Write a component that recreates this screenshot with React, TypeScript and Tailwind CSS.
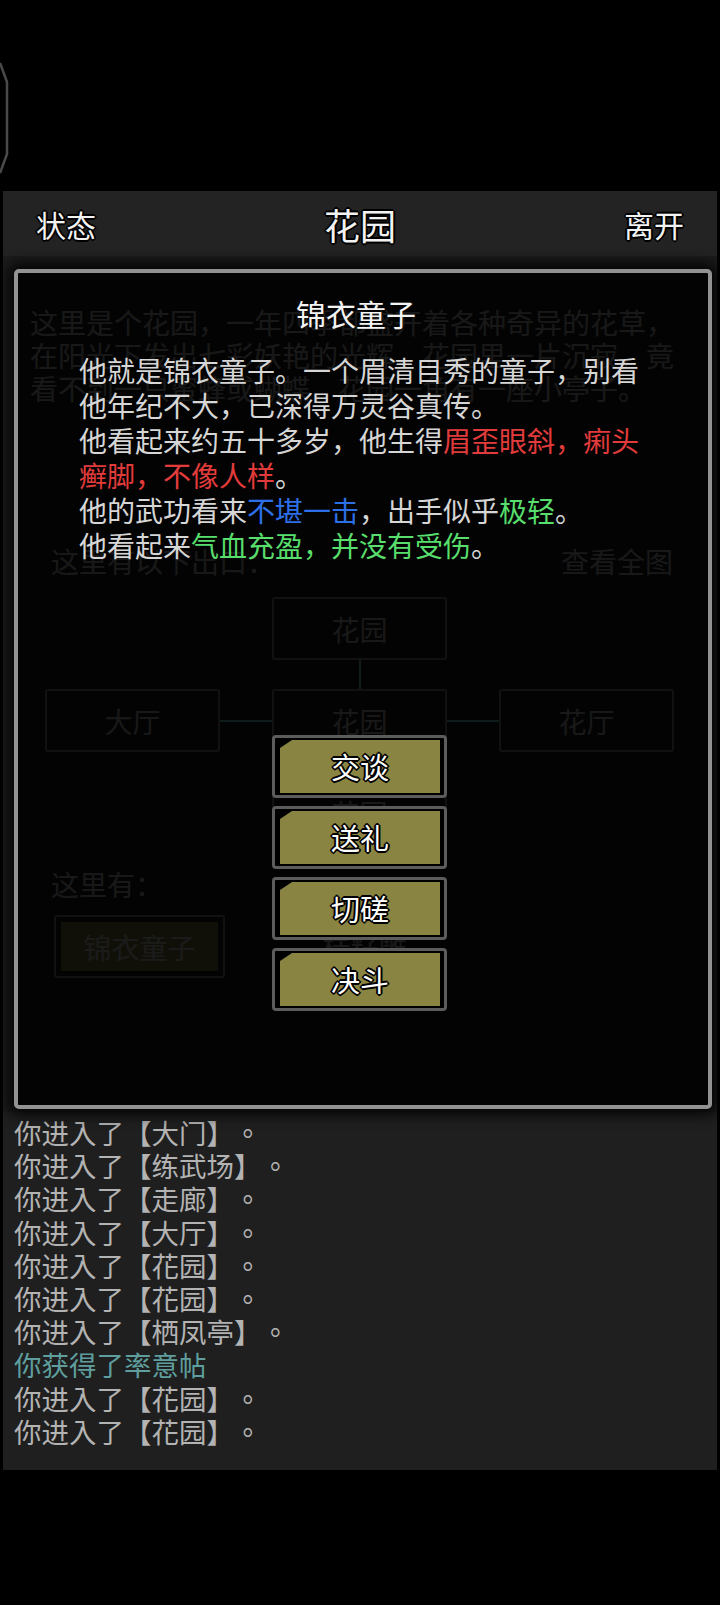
import React from "react";

const outline =
  "[text-shadow:-2px_0_0_#000,2px_0_0_#000,0_-2px_0_#000,0_2px_0_#000,-1px_-1px_0_#000,1px_1px_0_#000,-1px_1px_0_#000,1px_-1px_0_#000]";

const logLines: { text: string; gain?: boolean }[] = [
  { text: "你进入了【大门】。" },
  { text: "你进入了【练武场】。" },
  { text: "你进入了【走廊】。" },
  { text: "你进入了【大厅】。" },
  { text: "你进入了【花园】。" },
  { text: "你进入了【花园】。" },
  { text: "你进入了【栖凤亭】。" },
  { text: "你获得了率意帖", gain: true },
  { text: "你进入了【花园】。" },
  { text: "你进入了【花园】。" },
];

const actions = ["交谈", "送礼", "切磋", "决斗"];

function MapNode({ name }: { name: string }) {
  return (
    <div className="h-[63px] border-2 border-[#8a8a8a] rounded-[3px] flex items-center justify-center text-[28px] text-[#c4c4c4]">
      {name}
    </div>
  );
}

function ActionButton({ label }: { label: string }) {
  return (
    <div className="w-[175px] h-[63px] border-[3px] border-[#5c5c5c] rounded-[4px] bg-black pl-[5px] pr-[4px] pt-[2px] pb-[2px]">
      <div
        className={`h-full bg-[#8a8443] [clip-path:polygon(12px_0,100%_0,100%_100%,0_100%,0_8px)] flex items-center justify-center text-[29px] text-white ${outline}`}
      >
        {label}
      </div>
    </div>
  );
}

export default function App() {
  return (
    <div className="relative w-[720px] h-[1605px] bg-black overflow-hidden [text-spacing-trim:space-all] [font-family:'Noto_Sans_CJK_SC','Noto_Sans',sans-serif]">
      {/* floating ball peeking in from the left edge */}
      <svg className="absolute left-0 top-[60px]" width="12" height="116" viewBox="0 0 12 116">
        <path d="M0 3 L7 22 L7 94 L0 113" fill="none" stroke="#4a4a4a" strokeWidth="2.5" />
      </svg>

      <div className="h-[191px]" />

      {/* header */}
      <div className="mx-[3px] h-[65px] bg-[#232323] flex items-center justify-between px-[33px] text-[#f2f2f2]">
        <span className={`text-[30px] leading-none ${outline}`}>状态</span>
        <span className={`text-[36px] leading-none ${outline}`}>花园</span>
        <span className={`text-[30px] leading-none ${outline}`}>离开</span>
      </div>

      {/* room page */}
      <div className="relative mx-[3px] h-[856px] bg-[#1c1c1c] text-[#c4c4c4]">
        <div className="pt-[50px] pl-[27px] text-[28px] leading-[33px]">
          <div>这里是个花园，一年四季都盛开着各种奇异的花草，</div>
          <div>在阳光下发出七彩妖艳的光辉，花园里一片沉寂，竟</div>
          <div>看不到一只蜜蜂或蝴蝶，花园一角有一座小亭子。</div>
        </div>

        <div className="mt-[140px] pl-[48px] pr-[44px] flex justify-between text-[28px] leading-[33px]">
          <span>这里有以下出口：</span>
          <span>查看全图</span>
        </div>

        <div className="relative mt-[19px] ml-[42px] grid grid-cols-[175px_175px_175px] gap-x-[52px] gap-y-[29px]">
          <div />
          <MapNode name="花园" />
          <div />
          <MapNode name="大厅" />
          <MapNode name="花园" />
          <MapNode name="花厅" />
          <div />
          <MapNode name="花园" />
          <div />
          <div className="absolute left-[314px] top-[63px] w-[2px] h-[29px] bg-[#7ae6e6]" />
          <div className="absolute left-[314px] top-[155px] w-[2px] h-[29px] bg-[#7ae6e6]" />
          <div className="absolute left-[175px] top-[123px] w-[52px] h-[2px] bg-[#7ae6e6]" />
          <div className="absolute left-[402px] top-[123px] w-[52px] h-[2px] bg-[#7ae6e6]" />
        </div>

        <div className="mt-[24px] pl-[48px] text-[28px] leading-[33px]">这里有：</div>
        <div className="mt-[14px] ml-[51px] flex gap-[52px]">
          <div className="w-[171px] h-[63px] border-2 border-[#8a8a8a] rounded-[3px] p-[5px]">
            <div className="h-full bg-[#8a8443] flex items-center justify-center text-[28px] text-[#d8d8d8]">
              锦衣童子
            </div>
          </div>
          <div className="w-[175px] h-[63px] flex items-center justify-center text-[28px]">桂籽雕</div>
        </div>

        {/* npc dialog */}
        <div className="absolute left-[11px] top-[13px] w-[698px] h-[840px] border-[4px] border-[#929292] rounded-[5px] bg-black/[0.88] shadow-[0_0_14px_6px_rgba(0,0,0,0.85)]">
          <div className="pt-[22px] pr-[14px] text-center text-[30px] leading-[36px] text-[#f4f4f4]">锦衣童子</div>
          <div className="mt-[22px] pl-[61px] text-[28px] leading-[35px] text-[#d6d6d6]">
            <div>他就是锦衣童子。一个眉清目秀的童子，别看</div>
            <div>他年纪不大，已深得万灵谷真传。</div>
            <div>
              他看起来约五十多岁，他生得<span className="text-[#e23b3b]">眉歪眼斜，痢头</span>
            </div>
            <div>
              <span className="text-[#e23b3b]">癣脚，不像人样</span>。
            </div>
            <div>
              他的武功看来<span className="text-[#2d6fe6]">不堪一击</span>，出手似乎
              <span className="text-[#57de6c]">极轻</span>。
            </div>
            <div>
              他看起来<span className="text-[#57de6c]">气血充盈，并没有受伤</span>。
            </div>
          </div>
          <div className="mt-[172px] ml-[254px] flex flex-col gap-[8px]">
            {actions.map((a) => (
              <ActionButton key={a} label={a} />
            ))}
          </div>
        </div>
      </div>

      {/* message log */}
      <div className="mx-[3px] h-[358px] bg-[#1f1f1f] pt-[4px] pl-[11px] text-[27.5px] leading-[33.2px] text-[#b3b3b3] [font-family:'Noto_Sans_CJK_TC','Noto_Sans_CJK_SC',sans-serif]">
        {logLines.map((l, i) => (
          <div key={i} className={l.gain ? "text-[#5e9e9e]" : ""}>
            {l.text}
          </div>
        ))}
      </div>
    </div>
  );
}
